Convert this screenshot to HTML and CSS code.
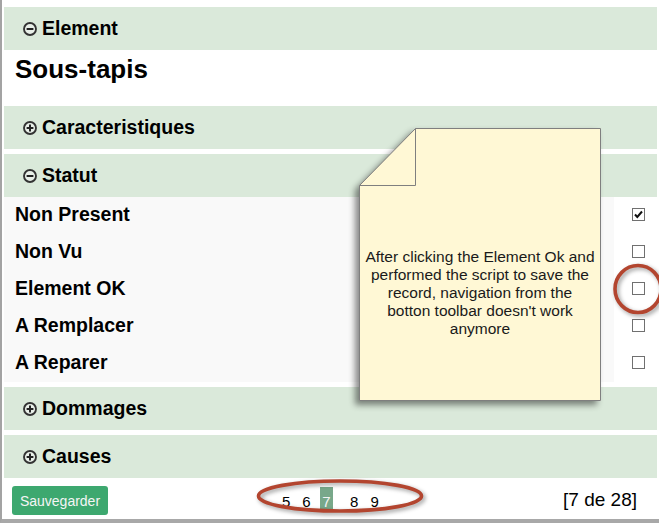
FILE: index.html
```html
<!DOCTYPE html>
<html>
<head>
<meta charset="utf-8">
<link rel="stylesheet" href="styles.css">
</head>
<body>
<div class="frame">
  <div class="bar">
    <svg class="ico" viewBox="0 0 14 14"><circle cx="7" cy="7" r="6" /><line x1="3.6" y1="7" x2="10.4" y2="7" /></svg>
    <span>Element</span>
  </div>
  <div class="title">Sous-tapis</div>
  <div class="bar">
    <svg class="ico" viewBox="0 0 14 14"><circle cx="7" cy="7" r="6" /><line x1="3.6" y1="7" x2="10.4" y2="7" /><line x1="7" y1="3.6" x2="7" y2="10.4" /></svg>
    <span>Caracteristiques</span>
  </div>
  <div class="bar gap">
    <svg class="ico" viewBox="0 0 14 14"><circle cx="7" cy="7" r="6" /><line x1="3.6" y1="7" x2="10.4" y2="7" /></svg>
    <span>Statut</span>
  </div>
  <div class="rows">
    <div class="row"><div class="label">Non Present</div><div class="cell"><span class="cb"><svg viewBox="0 0 11 11"><path d="M2 5.5 L4.3 8 L9 2.5" /></svg></span></div></div>
    <div class="row"><div class="label">Non Vu</div><div class="cell"><span class="cb"></span></div></div>
    <div class="row"><div class="label">Element OK</div><div class="cell"><span class="cb"></span></div></div>
    <div class="row"><div class="label">A Remplacer</div><div class="cell"><span class="cb"></span></div></div>
    <div class="row"><div class="label">A Reparer</div><div class="cell"><span class="cb"></span></div></div>
  </div>
  <div class="bar">
    <svg class="ico" viewBox="0 0 14 14"><circle cx="7" cy="7" r="6" /><line x1="3.6" y1="7" x2="10.4" y2="7" /><line x1="7" y1="3.6" x2="7" y2="10.4" /></svg>
    <span>Dommages</span>
  </div>
  <div class="bar gap">
    <svg class="ico" viewBox="0 0 14 14"><circle cx="7" cy="7" r="6" /><line x1="3.6" y1="7" x2="10.4" y2="7" /><line x1="7" y1="3.6" x2="7" y2="10.4" /></svg>
    <span>Causes</span>
  </div>
  <div class="footer">
    <button class="save">Sauvegarder</button>
    <div class="pager">
      <span class="pg">5</span><span class="pg">6</span><span class="pg cur">7</span><span class="pg">8</span><span class="pg">9</span>
    </div>
    <div class="count">[7 de 28]</div>
  </div>

  <div class="note">
    <svg class="note-bg" width="242" height="273" viewBox="0 0 242 273">
      <polygon points="56.5,0.5 241.5,0.5 241.5,272.5 0.5,272.5 0.5,57.5" />
      <polyline class="fold" points="56.5,0.5 56.5,57.5 0.5,57.5" />
    </svg>
    <div class="note-text">After clicking the Element Ok and<br>performed the script to save the<br>record, navigation from the<br>botton toolbar doesn't work<br>anymore</div>
  </div>

  <svg class="mark mark-cb" width="60" height="60" viewBox="0 0 60 60"><ellipse cx="30" cy="30" rx="23" ry="23.5" /></svg>
  <svg class="mark mark-pg" width="180" height="44" viewBox="0 0 180 44"><ellipse cx="90" cy="22" rx="81.5" ry="15" /></svg>
</div>
</body>
</html>
```

FILE: styles.css
```css
html, body {
  margin: 0;
  padding: 0;
  background: #fff;
}
.frame {
  position: relative;
  width: 659px;
  height: 523px;
  box-sizing: border-box;
  border-left: 2px solid #a3a3a3;
  border-bottom: 4px solid #a8a8a8;
  padding: 7px 2px 0 2px;
  font-family: "Liberation Sans", Arial, sans-serif;
  color: #000;
  overflow: hidden;
}
.bar {
  height: 43px;
  background: #dae9da;
  display: flex;
  align-items: center;
  padding-left: 19px;
  gap: 5px;
  font-weight: bold;
  font-size: 19.5px;
}
.bar.gap {
  margin-top: 5px;
}
.ico {
  width: 14px;
  height: 14px;
  flex: none;
  margin-top: 1px;
}
.ico circle {
  fill: #e8efe8;
  stroke: #333;
  stroke-width: 1.9;
}
.ico line {
  stroke: #222;
  stroke-width: 2;
}
.title {
  height: 56px;
  box-sizing: border-box;
  padding-left: 11px;
  font-size: 26px;
  font-weight: bold;
  line-height: 38px;
}
.rows {
  display: flex;
  flex-direction: column;
  margin-bottom: 5px;
}
.row {
  display: flex;
  height: 37px;
}
.label {
  flex: 1;
  background: #f9f9f9;
  padding: 0 0 3px 11px;
  line-height: 34px;
  font-size: 19.5px;
  font-weight: bold;
}
.cell {
  width: 43px;
  display: flex;
  align-items: center;
  padding: 0 0 3px 18px;
  box-sizing: border-box;
}
.cb {
  width: 13px;
  height: 13px;
  box-sizing: border-box;
  border: 1px solid #707070;
  background: #fff;
  display: block;
}
.cb svg {
  display: block;
  width: 11px;
  height: 11px;
}
.cb path {
  fill: none;
  stroke: #111;
  stroke-width: 2;
}
.footer {
  display: flex;
  align-items: flex-start;
  padding: 8px 0 0 8px;
}
.save {
  height: 29px;
  width: 96px;
  border: none;
  border-radius: 3px;
  background: #3da86f;
  color: #f5f5f5;
  font-family: "Liberation Sans", Arial, sans-serif;
  font-size: 14px;
  padding: 2px 0 0;
  line-height: 27px;
}
.pager {
  display: flex;
  margin-left: 168px;
  margin-top: 1px;
  font-size: 15px;
}
.pg {
  padding: 5px 6px 0;
  line-height: 20px;
}
.pg.cur {
  background: #78a88a;
  color: #f4f4f4;
  padding: 5px 2.5px 0;
  margin: 0 11px 0 3px;
}
.count {
  margin-left: auto;
  margin-right: 20px;
  margin-top: 3px;
  font-size: 19px;
  line-height: 22px;
}
.note {
  position: absolute;
  left: 357px;
  top: 128px;
  width: 242px;
  height: 273px;
}
.note-bg {
  position: absolute;
  left: 0;
  top: 0;
  overflow: visible;
  filter: drop-shadow(-4px 4px 3px rgba(0, 0, 0, 0.45));
}
.note-bg polygon {
  fill: #fff8d5;
  stroke: #7f7f7f;
  stroke-width: 1;
}
.note-bg .fold {
  fill: none;
  stroke: #7f7f7f;
  stroke-width: 1;
}
.note-text {
  position: absolute;
  left: 0;
  right: 0;
  top: 57px;
  bottom: 0;
  display: flex;
  align-items: center;
  justify-content: center;
  text-align: center;
  font-size: 15.5px;
  line-height: 18px;
  color: #1a1a1a;
}
.mark {
  position: absolute;
  overflow: visible;
  filter: drop-shadow(2px 2px 2px rgba(0, 0, 0, 0.4));
}
.mark ellipse {
  fill: none;
  stroke: #b3452f;
  stroke-width: 3.6;
}
.mark-cb {
  left: 606px;
  top: 259px;
}
.mark-pg {
  left: 248px;
  top: 474px;
}
```
